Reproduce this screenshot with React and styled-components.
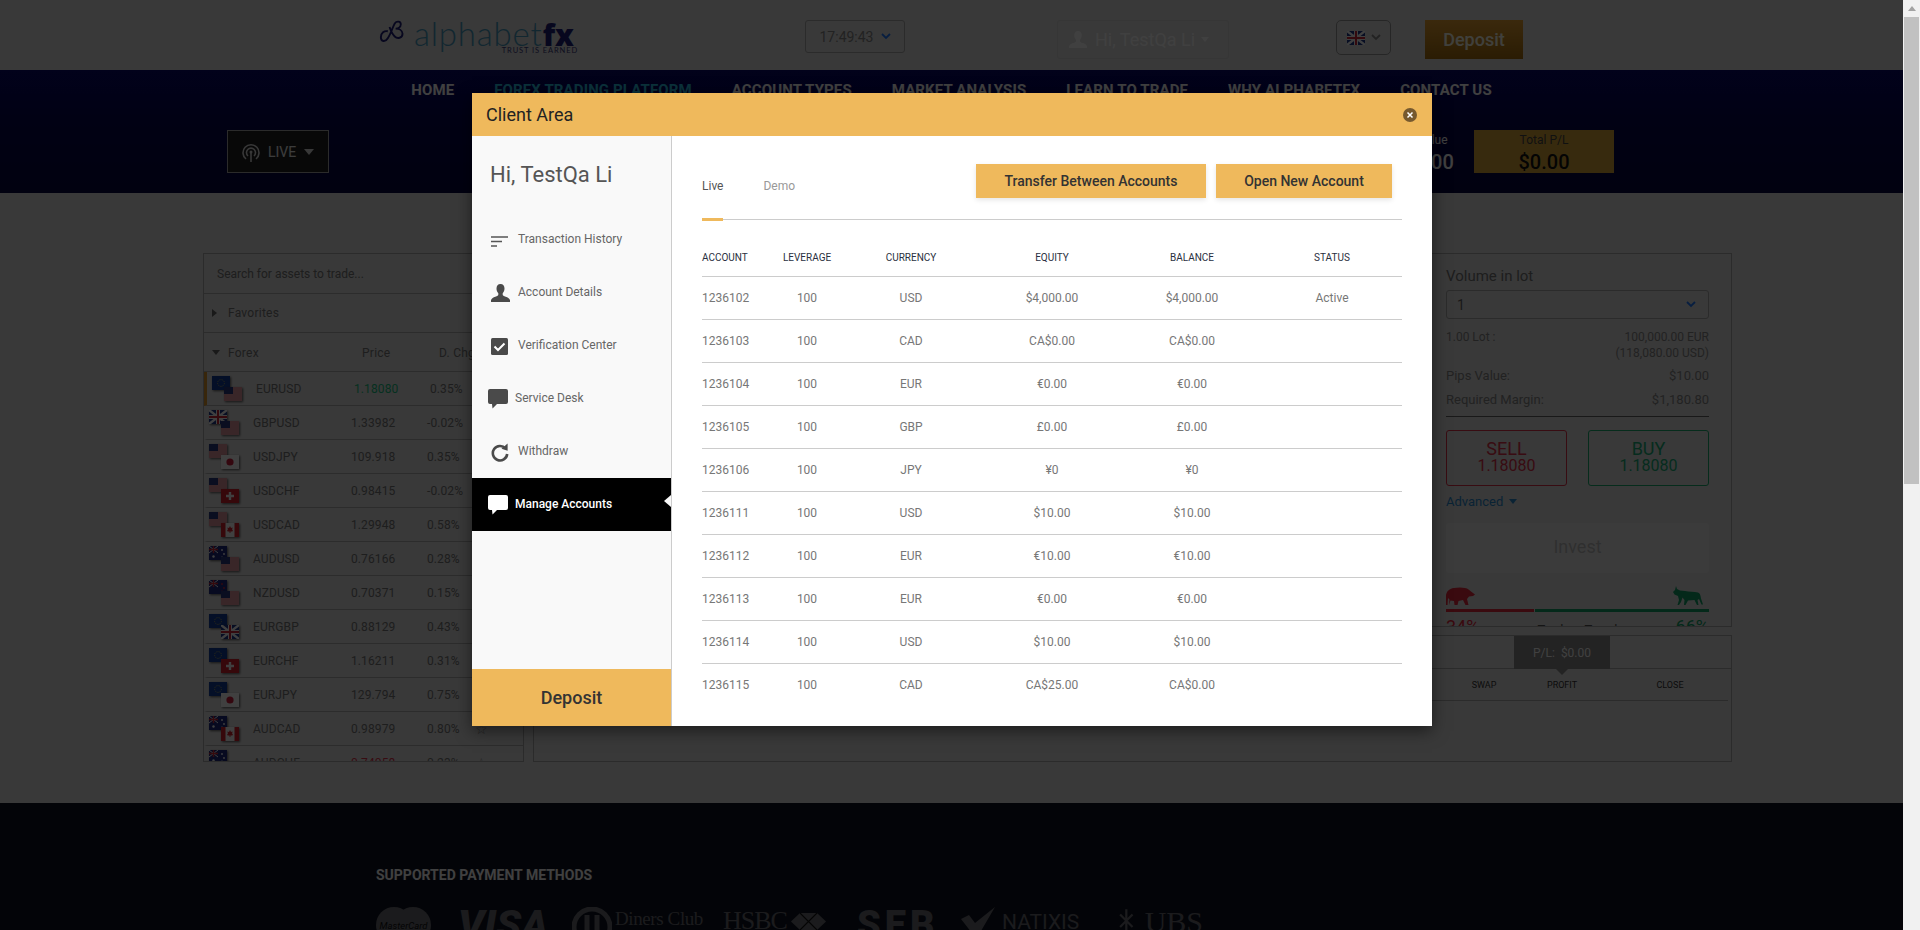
import styled, {createGlobalStyle} from "styled-components";

const GlobalStyle = createGlobalStyle`
  html, body {
    margin: 0;
    height: 930px;
    overflow: hidden;
    font-family: Roboto, "Liberation Sans", sans-serif;
  }
  * { box-sizing: border-box; }
`;

const Screen = styled.div`
  display: flex;
  width: 1920px;
  height: 930px;
`;

const Page = styled.div`
  position: relative;
  width: 1903px;
  height: 930px;
  overflow: hidden;
  background: #e2e2e2;
  display: flex;
  flex-direction: column;
`;

const Scrollbar = styled.div`
  width: 17px;
  background: #f1f1f1;
  display: flex;
  flex-direction: column;
  align-items: center;
`;

const ScrollArrow = styled.div`
  height: 17px;
  width: 17px;
  display: flex;
  align-items: center;
  justify-content: center;
  &::before {
    content: "";
    border-left: 4px solid transparent;
    border-right: 4px solid transparent;
    border-bottom: 5px solid #a3a3a3;
  }
`;

const ScrollThumb = styled.div`
  width: 15px;
  height: 467px;
  background: #c1c1c1;
`;

/* top bar */
const TopBar = styled.header`
  height: 70px;
  flex: none;
  display: flex;
  align-items: flex-start;
  padding: 20px 0 0 377px;
`;

const Logo = styled.div`
  width: 201px;
  height: 36px;
  display: flex;
  position: relative;
  align-items: flex-start;
`;

const LogoWord = styled.div`
  font-family: Lato, sans-serif;
  font-size: 33px;
  line-height: 32px;
  font-weight: 300;
  color: #4a9cc0;
  margin: -3px 0 0 5px;
  letter-spacing: 0.8px;
  white-space: nowrap;
  b {
    font-family: "Open Sans", sans-serif;
    font-size: 30px;
    font-weight: 800;
    color: #1c1c78;
    letter-spacing: 0;
  }
`;

const LogoTag = styled.div`
  position: absolute;
  right: 0;
  top: 26px;
  font-family: Lato, sans-serif;
  font-size: 7.5px;
  line-height: 9px;
  letter-spacing: 0.9px;
  color: #3a3a7a;
`;

const TimeBox = styled.div`
  width: 100px;
  height: 33px;
  margin-left: 227px;
  border: 1px solid #aaa;
  border-radius: 3px;
  display: flex;
  align-items: center;
  justify-content: center;
  gap: 7px;
  font-size: 14px;
  color: #888;
`;

const UserBox = styled.div`
  width: 172px;
  height: 39px;
  margin-left: 152px;
  border: 1px solid #d6d6d6;
  border-radius: 3px;
  display: flex;
  align-items: center;
  padding-left: 11px;
  gap: 8px;
  font-size: 18px;
  color: #fff;
  &::after {
    content: "";
    margin-left: -2px;
    border-left: 4px solid transparent;
    border-right: 4px solid transparent;
    border-top: 5px solid #fff;
  }
`;

const FlagBox = styled.div`
  width: 55px;
  height: 35px;
  margin-left: 107px;
  border: 1px solid #999;
  border-radius: 5px;
  display: flex;
  align-items: center;
  padding-left: 10px;
  gap: 6px;
`;

const HeaderDeposit = styled.div`
  width: 98px;
  height: 39px;
  margin-left: 34px;
  background: linear-gradient(#e9a233, #a8700f);
  display: flex;
  align-items: center;
  justify-content: center;
  font-size: 18px;
  font-weight: 500;
  color: #ffe;
`;

/* navigation band */
const NavBand = styled.div`
  height: 123px;
  flex: none;
  background: linear-gradient(#08086c, #060650 40%, #050540);
  position: relative;
`;

const Nav = styled.nav`
  display: flex;
  justify-content: center;
  gap: 40px;
  padding-top: 11px;
`;

const NavLink = styled.a`
  font-size: 15px;
  line-height: 18px;
  font-weight: 700;
  letter-spacing: 0.12px;
  color: ${(p) => (p.$active ? "#2fc4e8" : "#ffffff")};
`;

const AccountRow = styled.div`
  display: flex;
  align-items: stretch;
  height: 43px;
  margin-top: 31px;
  padding: 0 289px 0 227px;
`;

const LiveBox = styled.div`
  width: 102px;
  background: #222;
  border: 1px solid #aaa;
  display: flex;
  align-items: center;
  padding-left: 14px;
  gap: 8px;
  font-size: 14px;
  color: #eee;
  &::after {
    content: "";
    border-left: 5px solid transparent;
    border-right: 5px solid transparent;
    border-top: 6px solid #ddd;
  }
`;

const Stat = styled.div`
  margin-left: auto;
  width: 90px;
  margin-right: 20px;
  text-align: center;
  color: #fff;
  font-size: 12px;
  padding-top: 3px;
  div {
    font-size: 20px;
    font-weight: 500;
    margin-top: 3px;
  }
`;

const TotalBox = styled.div`
  width: 140px;
  background: #dca838;
  color: #444;
  text-align: center;
  font-size: 12px;
  padding-top: 3px;
  div {
    font-size: 20px;
    font-weight: 500;
    margin-top: 3px;
    color: #111;
  }
`;

/* platform panels */
const Main = styled.main`
  height: 610px;
  flex: none;
  padding: 60px 171px 0 203px;
  display: flex;
  gap: 9px;
  align-items: flex-start;
`;

const AssetPanel = styled.section`
  width: 321px;
  height: 509px;
  flex: none;
  border: 1px solid #aaa;
  overflow: hidden;
`;

const SearchRow = styled.div`
  height: 40px;
  border-bottom: 1px solid #b0b0b0;
  padding: 0 13px;
  display: flex;
  align-items: center;
  font-size: 12px;
  color: #777;
`;

const GroupRow = styled.div`
  height: ${(p) => p.$height}px;
  padding-top: ${(p) => p.$top || 0}px;
  border-bottom: 1px solid #b0b0b0;
  display: grid;
  grid-template-columns: 18px 134px 77px 1fr;
  align-items: center;
  padding-left: 6px;
  font-size: 12px;
  letter-spacing: 0.25px;
  color: #777;
`;

const Caret = styled.i`
  width: 0;
  height: 0;
  margin-left: 2px;
  ${(p) =>
    p.$open
      ? "border-left: 4px solid transparent; border-right: 4px solid transparent; border-top: 5px solid #666;"
      : "border-top: 4px solid transparent; border-bottom: 4px solid transparent; border-left: 5px solid #666;"}
`;

const AssetRow = styled.div`
  height: 34px;
  flex: none;
  border-bottom: 1px solid #b0b0b0;
  border-left: 3px solid ${(p) => (p.$active ? "#e0992c" : "transparent")};
  display: grid;
  grid-template-columns: ${(p) => (p.$active ? "49px" : "46px")} 98px 76px 48px 1fr;
  align-items: center;
  font-size: 12px;
  letter-spacing: 0.1px;
  color: #777;
`;

const FlagPair = styled.div`
  position: relative;
  height: 33px;
  margin-left: ${(p) => (p.$active ? "5px" : "2px")};
  svg {
    position: absolute;
    filter: drop-shadow(1px 1px 1px rgba(0, 0, 0, 0.6));
  }
  svg:first-child {
    left: 0;
    top: 4px;
  }
  svg:last-child {
    left: 12px;
    top: 15px;
  }
`;

const Price = styled.span`
  color: ${(p) => (p.$tone === "up" ? "#18c080" : p.$tone === "down" ? "#e0304a" : "#777")};
`;

const Star = styled.span`
  font-size: 14px;
  color: #888;
`;

const Workspace = styled.div`
  flex: 1;
  min-width: 0;
  height: 509px;
  display: flex;
  flex-direction: column;
  gap: 8px;
`;

const UpperRow = styled.div`
  height: 374px;
  flex: none;
  display: flex;
  border: 1px solid #aaa;
  overflow: hidden;
`;

const ChartArea = styled.div`
  flex: 1;
`;

const TradePanel = styled.aside`
  width: 297px;
  flex: none;
  padding: 11px 22px 0 12px;
  font-size: 12px;
  color: #888;
`;

const TradeTitle = styled.div`
  font-size: 15px;
  line-height: 22px;
  color: #777;
`;

const VolumeSelect = styled.div`
  height: 29px;
  margin-top: 3px;
  border: 1px solid #aaa;
  border-radius: 3px;
  display: flex;
  align-items: center;
  justify-content: space-between;
  padding: 0 12px 0 10px;
  font-size: 14px;
  color: #666;
`;

const InfoRow = styled.div`
  display: flex;
  justify-content: space-between;
  margin-top: ${(p) => p.$top || 0}px;
  line-height: 16px;
  font-size: ${(p) => p.$size || 12}px;
  text-align: right;
`;

const InfoRule = styled.div`
  height: 1px;
  background: #666;
  margin-top: 8px;
`;

const Sides = styled.div`
  display: flex;
  justify-content: space-between;
  margin-top: 13px;
`;

const SideButton = styled.div`
  width: 121px;
  height: 56px;
  border: 1px solid ${(p) => (p.$buy ? "#18b070" : "#e03048")};
  border-radius: 3px;
  text-align: center;
  color: ${(p) => (p.$buy ? "#18b078" : "#e03048")};
  font-size: 18px;
  line-height: 17px;
  padding-top: 9px;
  span {
    display: block;
    font-size: 16px;
  }
`;

const Advanced = styled.div`
  margin-top: 8px;
  margin-bottom: 14px;
  font-size: 13px;
  line-height: 15px;
  color: #2a8ad0;
  display: flex;
  align-items: center;
  gap: 6px;
  &::after {
    content: "";
    border-left: 4px solid transparent;
    border-right: 4px solid transparent;
    border-top: 5px solid #2a8ad0;
  }
`;

const InvestBox = styled.div`
  height: 50px;
  border-radius: 3px;
  background: #ececec;
  display: flex;
  align-items: flex-start;
  justify-content: center;
  padding-top: 13px;
  font-size: 18px;
  color: #bcbcbc;
`;

const TrendIcons = styled.div`
  display: flex;
  justify-content: space-between;
  align-items: flex-end;
  margin-top: 13px;
  padding-right: 6px;
`;

const TrendBar = styled.div`
  display: flex;
  gap: 1px;
  height: 3px;
  margin-top: 4px;
`;

const TrendPart = styled.div`
  width: ${(p) => p.$width}px;
  background: ${(p) => p.$color};
`;

const TrendText = styled.div`
  display: flex;
  justify-content: space-between;
  align-items: flex-end;
  margin-top: 4px;
  font-size: 13px;
  color: #555;
`;

const TrendValue = styled.span`
  font-size: 18px;
  color: ${(p) => p.$color};
`;

const PositionsPanel = styled.div`
  height: 127px;
  flex: none;
  border: 1px solid #aaa;
  position: relative;
`;

const TopStrip = styled.div`
  height: 33px;
  border-bottom: 1px solid #aaa;
`;

const ColumnStrip = styled.div`
  height: 32px;
  margin-right: 3px;
  border-bottom: 1px solid #aaa;
  display: flex;
  align-items: center;
  padding-left: 911px;
  font-size: 9px;
  color: #333;
`;

const ColumnCell = styled.span`
  width: ${(p) => p.$width}px;
  text-align: center;
  flex: none;
`;

const PnlTip = styled.div`
  position: absolute;
  top: 0;
  left: 980px;
  width: 96px;
  height: 33px;
  background: #8a8a8a;
  color: #fff;
  font-size: 12px;
  display: flex;
  align-items: center;
  justify-content: center;
  gap: 6px;
  &::after {
    content: "";
    position: absolute;
    top: 33px;
    left: 42px;
    border-left: 6px solid transparent;
    border-right: 6px solid transparent;
    border-top: 6px solid #8a8a8a;
  }
`;

/* footer */
const Footer = styled.footer`
  flex: 1;
  overflow: hidden;
  background: #0e1320;
  padding: 62px 0 0 376px;
`;

const FooterTitle = styled.div`
  font-size: 14px;
  line-height: 20px;
  font-weight: 700;
  color: #ffffff;
`;

const Brands = styled.div`
  display: flex;
  align-items: flex-start;
  margin-top: 22px;
  color: #6c6c74;
`;

const Brand = styled.span`
  width: ${(p) => p.$width}px;
  flex: none;
  display: flex;
  gap: ${(p) => p.$gap || 0}px;
  font-family: ${(p) => p.$font || "Roboto, sans-serif"};
  font-size: ${(p) => p.$size}px;
  font-weight: ${(p) => p.$weight || 400};
  font-style: ${(p) => (p.$italic ? "italic" : "normal")};
  letter-spacing: ${(p) => p.$spacing || 0}px;
  line-height: ${(p) => p.$line || 40}px;
  white-space: nowrap;
`;

const DinersText = styled.span`
  display: flex;
  flex-direction: column;
  padding-top: 2px;
  small {
    font-size: 8px;
    line-height: 9px;
    letter-spacing: 0.3px;
  }
`;

const HexWrap = styled.span`
  display: flex;
  margin: 6px 0 0 4px;
`;

const MasterBadge = styled.span`
  position: relative;
  width: 55px;
  height: 36px;
  margin-right: 27px;
  flex: none;
  color: #111;
  font-size: 9.5px;
  font-style: italic;
  display: flex;
  align-items: center;
  justify-content: center;
  z-index: 0;
  &::before,
  &::after {
    content: "";
    position: absolute;
    top: 0;
    width: 36px;
    height: 36px;
    border-radius: 50%;
    background: #6c6c74;
    z-index: -1;
  }
  &::before {
    left: 0;
  }
  &::after {
    right: 0;
  }
`;

/* modal */
const Backdrop = styled.div`
  position: absolute;
  inset: 0;
  background: rgba(0, 0, 0, 0.75);
  padding: 93px 0 0 472px;
`;

const Modal = styled.div`
  width: 960px;
  height: 633px;
  background: #fff;
  box-shadow: 0 5px 15px rgba(0, 0, 0, 0.5);
  display: flex;
  flex-direction: column;
`;

const ModalHead = styled.div`
  height: 43px;
  flex: none;
  background: #efb95c;
  display: flex;
  align-items: center;
  justify-content: space-between;
  padding: 0 15px 0 14px;
  font-size: 18px;
  color: #222;
`;

const CloseButton = styled.button`
  width: 14px;
  height: 14px;
  padding: 0;
  border: none;
  border-radius: 50%;
  background: #76592e;
  display: flex;
  align-items: center;
  justify-content: center;
`;

const ModalBody = styled.div`
  flex: 1;
  display: flex;
  min-height: 0;
`;

const Sidebar = styled.div`
  width: 200px;
  flex: none;
  background: #f9f9f9;
  border-right: 1px solid #ccc;
  display: flex;
  flex-direction: column;
`;

const Greeting = styled.div`
  height: 77px;
  flex: none;
  padding: 25px 0 0 18px;
  font-size: 22px;
  line-height: 28px;
  color: #555;
`;

const MenuItem = styled.a`
  position: relative;
  height: 53px;
  flex: none;
  display: flex;
  align-items: center;
  padding-left: 16px;
  font-size: 12px;
  font-weight: ${(p) => (p.$active ? 500 : 400)};
  color: ${(p) => (p.$active ? "#fff" : "#666")};
  background: ${(p) => (p.$active ? "#000" : "transparent")};
  ${(p) =>
    p.$active &&
    `&::after {
      content: "";
      position: absolute;
      right: 0;
      top: 17px;
      border-top: 6px solid transparent;
      border-bottom: 6px solid transparent;
      border-right: 7px solid #f9f9f9;
    }`}
`;

const MenuIcon = styled.span`
  width: ${(p) => (p.$wide ? 27 : 30)}px;
  flex: none;
  display: flex;
  padding-left: ${(p) => (p.$wide ? 0 : 3)}px;
`;

const MenuLabel = styled.span`
  margin-bottom: 2px;
`;

const SideDeposit = styled.button`
  margin-top: auto;
  height: 57px;
  flex: none;
  border: none;
  background: #efb95c;
  font-family: inherit;
  font-size: 18px;
  font-weight: 500;
  color: #333;
`;

const Content = styled.div`
  flex: 1;
  min-width: 0;
  padding: 0 30px;
`;

const ContentBar = styled.div`
  position: relative;
  height: 84px;
  padding: 28px 10px 0 0;
  border-bottom: 1px solid #ccc;
  display: flex;
  align-items: flex-start;
  &::after {
    content: "";
    position: absolute;
    left: 0;
    bottom: -2px;
    width: 21px;
    height: 3px;
    background: #efb95c;
  }
`;

const Tabs = styled.div`
  display: flex;
  gap: 40px;
  margin-top: 14px;
  margin-right: auto;
`;

const Tab = styled.a`
  font-size: 12px;
  line-height: 16px;
  color: ${(p) => (p.$active ? "#555" : "#999")};
`;

const ActionButton = styled.button`
  width: ${(p) => p.$width}px;
  height: 34px;
  margin-left: ${(p) => p.$left || 0}px;
  border: none;
  background: #efb95c;
  box-shadow: 0 2px 5px rgba(0, 0, 0, 0.1);
  font-family: inherit;
  font-size: 14px;
  font-weight: 500;
  color: #333;
`;

const TableGrid = `
  display: grid;
  grid-template-columns: 72px 66px 142px 140px 140px 140px;
  align-items: center;
`;

const HeadRow = styled.div`
  ${TableGrid}
  height: 57px;
  padding-top: 18px;
  border-bottom: 1px solid #ccc;
  font-size: 10px;
  color: #2a3040;
`;

const BodyRow = styled.div`
  ${TableGrid}
  height: 43px;
  padding-bottom: 1px;
  border-bottom: ${(p) => (p.$last ? "none" : "1px solid #ccc")};
  font-size: 12px;
  color: #777;
`;

const Cell = styled.span`
  text-align: ${(p) => (p.$left ? "left" : "center")};
`;

const Flag = ({code}) => {
  const art = {
    eu: (
      <>
        <rect width="18" height="14" fill="#123f9c" />
        <circle cx="9" cy="7" r="3.4" fill="none" stroke="#e8c840" strokeWidth="0.8" strokeDasharray="0.8 1.1" />
      </>
    ),
    us: (
      <>
        <rect width="18" height="14" fill="#fff" />
        <path d="M0 1h18M0 3h18M0 5h18M0 7h18M0 9h18M0 11h18M0 13h18" stroke="#c8313e" strokeWidth="1" />
        <rect width="9" height="7" fill="#2a3a80" />
      </>
    ),
    gb: (
      <>
        <rect width="18" height="14" fill="#1f3a8c" />
        <path d="M0 0l18 14M18 0L0 14" stroke="#fff" strokeWidth="2.4" />
        <path d="M9 0v14M0 7h18" stroke="#fff" strokeWidth="4" />
        <path d="M9 0v14M0 7h18" stroke="#d02838" strokeWidth="2" />
      </>
    ),
    jp: (
      <>
        <rect width="18" height="14" fill="#fff" />
        <circle cx="9" cy="7" r="3.6" fill="#d01c3c" />
      </>
    ),
    ch: (
      <>
        <rect width="18" height="14" fill="#d8202c" />
        <path d="M9 3v8M5 7h8" stroke="#fff" strokeWidth="2.4" />
      </>
    ),
    ca: (
      <>
        <rect width="18" height="14" fill="#fff" />
        <rect width="4.5" height="14" fill="#d8202c" />
        <rect x="13.5" width="4.5" height="14" fill="#d8202c" />
        <path d="M9 3l1 2 1.6-.6-.6 2.6 1-.2-.6 1.6H9.4V10h-.8V8.4H6.6L6 6.8l1 .2-.6-2.6L8 5z" fill="#d8202c" />
      </>
    ),
    au: (
      <>
        <rect width="18" height="14" fill="#1c2a80" />
        <path d="M0 0l9 7M9 0L0 7" stroke="#fff" strokeWidth="1" />
        <path d="M4.5 0v7M0 3.5h9" stroke="#d02838" strokeWidth="1.4" />
        <circle cx="4.5" cy="10.5" r="1.2" fill="#fff" />
        <circle cx="13" cy="4" r="0.9" fill="#fff" />
        <circle cx="15" cy="8" r="0.9" fill="#fff" />
        <circle cx="13" cy="11.5" r="0.9" fill="#fff" />
      </>
    ),
    nz: (
      <>
        <rect width="18" height="14" fill="#1c2a80" />
        <path d="M0 0l9 7M9 0L0 7" stroke="#fff" strokeWidth="1" />
        <path d="M4.5 0v7M0 3.5h9" stroke="#d02838" strokeWidth="1.4" />
        <circle cx="13" cy="4" r="0.9" fill="#d02838" />
        <circle cx="15" cy="8" r="0.9" fill="#d02838" />
        <circle cx="13" cy="11.5" r="0.9" fill="#d02838" />
      </>
    ),
  };
  return (
    <svg width="18" height="14" viewBox="0 0 18 14">
      {art[code]}
    </svg>
  );
};

const Chevron = ({color}) => (
  <svg width="10" height="7" viewBox="0 0 10 7">
    <path d="M1 1l4 4 4-4" fill="none" stroke={color} strokeWidth="1.8" />
  </svg>
);

const PersonIcon = ({fill, size = 19}) => (
  <svg width={size} height={(size * 18) / 19} viewBox="0 0 19 18">
    <path
      d="M9.5 0c2.6 0 4 2 4 4.6 0 2-.8 3.6-1.8 4.6v1.6c0 .8 1 1.2 3 2 2 .7 3.6 1.6 4.3 3.2V18H0v-2c.7-1.6 2.3-2.5 4.3-3.2 2-.8 3-1.2 3-2V9.2c-1-1-1.8-2.6-1.8-4.6C5.5 2 6.9 0 9.5 0z"
      fill={fill}
    />
  </svg>
);

const LinesIcon = () => (
  <svg width="18" height="20" viewBox="0 0 18 20">
    <path d="M0 7h17M0 11.5h11M0 16h6" fill="none" stroke="#555" strokeWidth="1.7" />
  </svg>
);

const CheckIcon = () => (
  <svg width="17" height="20" viewBox="0 0 17 20">
    <rect y="2" width="17" height="17" rx="1.5" fill="#4a4a4a" />
    <path d="M3.5 10.5l3.5 3.5 6.5-6.5" fill="none" stroke="#fff" strokeWidth="2" />
  </svg>
);

const ChatIcon = ({fill}) => (
  <svg width="20" height="20" viewBox="0 0 20 20">
    <path d="M2 0h16a2 2 0 0 1 2 2v11a2 2 0 0 1-2 2H9l-4.5 4.5L4 15H2a2 2 0 0 1-2-2V2a2 2 0 0 1 2-2z" fill={fill} />
  </svg>
);

const RefreshIcon = () => (
  <svg width="18" height="20" viewBox="0 0 18 20">
    <path d="M14.5 6.5A7.2 7.2 0 1 0 16.2 12" fill="none" stroke="#4a4a4a" strokeWidth="2.6" />
    <path d="M10.5 6.8L16.6 8.8 16.6 1.4z" fill="#4a4a4a" />
  </svg>
);

const CloseIcon = () => (
  <svg width="8" height="8" viewBox="0 0 8 8">
    <path d="M1.5 1.5l5 5M6.5 1.5l-5 5" stroke="#fff" strokeWidth="1.5" />
  </svg>
);

const SignalIcon = () => (
  <svg width="18" height="22" viewBox="0 0 18 22">
    <g fill="none" stroke="#ddd" strokeWidth="1.6">
      <path d="M4 18a8 8 0 1 1 10 0" />
      <path d="M6 15a4.5 4.5 0 1 1 6 0" />
    </g>
    <circle cx="9" cy="11" r="1.5" fill="#ddd" />
    <path d="M9 12v9" stroke="#ddd" strokeWidth="1.6" />
  </svg>
);

const BearIcon = () => (
  <svg width="29" height="18" viewBox="0 0 29 18">
    <path
      d="M0 18V9C0 5 3 1.5 8 1c3-.5 7-1 11 0 3 .5 4.5 2 6 3.5L29 7.5l-2 1.5-4 .5-2 2.5 1.5 6h-3l-2.5-5-4.5 1-1 4h-3l-.5-4-3.5-.5-1.5 4.5H3l.5-5.5L2 11l-.5 7z"
      fill="#e8283c"
    />
  </svg>
);

const BullIcon = () => (
  <svg width="30" height="19" viewBox="0 0 30 19">
    <path
      d="M3 0l1 3 3 1.5L12 5c4 1 9 .5 13 1.5 2 .5 2.5 3 3 6l2 6h-1.5L26 13l-1.5 1 1 5H24l-2.500-5-6.500.5L12.500 19H11l.5-5-2-2.500L8 16l-2 3H4.500L6 14 5 10 1.500 8.500 0 6l2-2z"
      fill="#10a468"
    />
  </svg>
);

const DinersMark = () => (
  <svg width="40" height="40" viewBox="0 0 40 40">
    <circle cx="20" cy="20" r="18" fill="none" stroke="#6c6c74" strokeWidth="5" />
    <path d="M15 8v24M25 8v24" stroke="#6c6c74" strokeWidth="5" />
  </svg>
);

const HexMark = () => (
  <svg width="35" height="17" viewBox="0 0 35 17">
    <path d="M9 0h17l9 8.5L26 17H9L0 8.500z" fill="#6c6c74" />
    <path d="M9 0l8.500 8.500L9 17M26 0l-8.500 8.500L26 17" fill="none" stroke="#111" strokeWidth="1.2" />
  </svg>
);

const NatixisMark = () => (
  <svg width="36" height="30" viewBox="0 0 36 30">
    <path d="M0 12l8-4 6 8L34 0 20 24l-6 6z" fill="#6c6c74" />
  </svg>
);

const KeysMark = () => (
  <svg width="30" height="40" viewBox="0 0 30 40">
    <g fill="none" stroke="#6c6c74" strokeWidth="2.5">
      <path d="M15 0v26M8 6l14 14M22 6L8 20" />
      <circle cx="7" cy="30" r="4" />
      <circle cx="15" cy="30" r="4" />
      <circle cx="23" cy="30" r="4" />
    </g>
  </svg>
);

const ACCOUNTS = [
  ["1236102", "USD", "$4,000.00", "$4,000.00", "Active"],
  ["1236103", "CAD", "CA$0.00", "CA$0.00", ""],
  ["1236104", "EUR", "€0.00", "€0.00", ""],
  ["1236105", "GBP", "£0.00", "£0.00", ""],
  ["1236106", "JPY", "¥0", "¥0", ""],
  ["1236111", "USD", "$10.00", "$10.00", ""],
  ["1236112", "EUR", "€10.00", "€10.00", ""],
  ["1236113", "EUR", "€0.00", "€0.00", ""],
  ["1236114", "USD", "$10.00", "$10.00", ""],
  ["1236115", "CAD", "CA$25.00", "CA$0.00", ""],
];

const ASSETS = [
  ["EURUSD", "1.18080", "0.35%", "eu", "us", "up"],
  ["GBPUSD", "1.33982", "-0.02%", "gb", "us"],
  ["USDJPY", "109.918", "0.35%", "us", "jp"],
  ["USDCHF", "0.98415", "-0.02%", "us", "ch"],
  ["USDCAD", "1.29948", "0.58%", "us", "ca"],
  ["AUDUSD", "0.76166", "0.28%", "au", "us"],
  ["NZDUSD", "0.70371", "0.15%", "nz", "us"],
  ["EURGBP", "0.88129", "0.43%", "eu", "gb"],
  ["EURCHF", "1.16211", "0.31%", "eu", "ch"],
  ["EURJPY", "129.794", "0.75%", "eu", "jp"],
  ["AUDCAD", "0.98979", "0.80%", "au", "ca"],
  ["AUDCHF", "0.74058", "0.23%", "au", "ch", "down"],
];

const NAV = ["HOME", "FOREX TRADING PLATFORM", "ACCOUNT TYPES", "MARKET ANALYSIS", "LEARN TO TRADE", "WHY ALPHABETFX", "CONTACT US"];

const MENU = [
  ["Transaction History", <LinesIcon key="l" />],
  ["Account Details", <PersonIcon key="p" fill="#4a4a4a" />],
  ["Verification Center", <CheckIcon key="c" />],
  ["Service Desk", <ChatIcon key="s" fill="#4a4a4a" />, true],
  ["Withdraw", <RefreshIcon key="r" />],
  ["Manage Accounts", <ChatIcon key="m" fill="#fff" />, true, true],
];

const App = () => {
  return (
    <Screen>
      <GlobalStyle />
      <Page>
        <TopBar>
          <Logo>
            <svg width="32" height="26" viewBox="0 0 32 30">
              <g fill="none" stroke="#1c1c78" strokeWidth="2.2">
                <path d="M10 13c-4-1-8 2-8 7s5 6 8 1c4-6 6-14 8-17 2-3 7-3 7 1s-4 5-6 5c4 0 8 2 8 6 0 5-6 6-9 3-2-2-5-8-6-11" />
              </g>
            </svg>
            <LogoWord>
              alphabet<b>fx</b>
            </LogoWord>
            <LogoTag>TRUST IS EARNED</LogoTag>
          </Logo>
          <TimeBox>
            17:49:43
            <Chevron color="#1f78ff" />
          </TimeBox>
          <UserBox>
            <PersonIcon fill="#fff" size={18} />
            Hi, TestQa Li
          </UserBox>
          <FlagBox>
            <Flag code="gb" />
            <Chevron color="#888" />
          </FlagBox>
          <HeaderDeposit>Deposit</HeaderDeposit>
        </TopBar>

        <NavBand>
          <Nav>
            {NAV.map((item, i) => (
              <NavLink key={item} $active={i === 1}>
                {item}
              </NavLink>
            ))}
          </Nav>
          <AccountRow>
            <LiveBox>
              <SignalIcon />
              LIVE
            </LiveBox>
            <Stat>
              Account Value
              <div>$4,000.00</div>
            </Stat>
            <TotalBox>
              Total P/L
              <div>$0.00</div>
            </TotalBox>
          </AccountRow>
        </NavBand>

        <Main>
          <AssetPanel>
            <SearchRow>Search for assets to trade...</SearchRow>
            <GroupRow $height={39}>
              <Caret />
              <span>Favorites</span>
            </GroupRow>
            <GroupRow $height={39} $top={1}>
              <Caret $open />
              <span>Forex</span>
              <span>Price</span>
              <span>D. Chg</span>
            </GroupRow>
            {ASSETS.map(([name, price, change, a, b, tone], i) => (
              <AssetRow key={name} $active={i === 0}>
                <FlagPair $active={i === 0}>
                  <Flag code={a} />
                  <Flag code={b} />
                </FlagPair>
                <span>{name}</span>
                <Price $tone={tone}>{price}</Price>
                <span>{change}</span>
                <Star>☆</Star>
              </AssetRow>
            ))}
          </AssetPanel>

          <Workspace>
            <UpperRow>
              <ChartArea />
              <TradePanel>
                <TradeTitle>Volume in lot</TradeTitle>
                <VolumeSelect>
                  1
                  <Chevron color="#1f78ff" />
                </VolumeSelect>
                <InfoRow $top={10}>
                  <span>1.00 Lot :</span>
                  <span>
                    100,000.00 EUR
                    <br />
                    (118,080.00 USD)
                  </span>
                </InfoRow>
                <InfoRow $top={7} $size={13}>
                  <span>Pips Value:</span>
                  <span>$10.00</span>
                </InfoRow>
                <InfoRow $top={8} $size={13}>
                  <span>Required Margin:</span>
                  <span>$1,180.80</span>
                </InfoRow>
                <InfoRule />
                <Sides>
                  <SideButton>
                    SELL
                    <span>1.18080</span>
                  </SideButton>
                  <SideButton $buy>
                    BUY
                    <span>1.18080</span>
                  </SideButton>
                </Sides>
                <Advanced>Advanced</Advanced>
                <InvestBox>Invest</InvestBox>
                <TrendIcons>
                  <BearIcon />
                  <BullIcon />
                </TrendIcons>
                <TrendBar>
                  <TrendPart $width={88} $color="#e8283c" />
                  <TrendPart $width={174} $color="#10a468" />
                </TrendBar>
                <TrendText>
                  <TrendValue $color="#e8283c">34%</TrendValue>
                  Traders Trend
                  <TrendValue $color="#10a468">66%</TrendValue>
                </TrendText>
              </TradePanel>
            </UpperRow>
            <PositionsPanel>
              <TopStrip />
              <PnlTip>
                <span>P/L:</span>
                <span>$0.00</span>
              </PnlTip>
              <ColumnStrip>
                <ColumnCell $width={78}>SWAP</ColumnCell>
                <ColumnCell $width={78}>PROFIT</ColumnCell>
                <ColumnCell $width={138}>CLOSE</ColumnCell>
              </ColumnStrip>
            </PositionsPanel>
          </Workspace>
        </Main>

        <Footer>
          <FooterTitle>SUPPORTED PAYMENT METHODS</FooterTitle>
          <Brands>
            <MasterBadge>MasterCard</MasterBadge>
            <Brand $width={114} $size={41} $weight={900} $line={36} $italic>
              VISA
            </Brand>
            <Brand $width={151} $size={19} $spacing={-0.4} $line={20} $gap={3} $font='"Liberation Serif", serif'>
              <DinersMark />
              <DinersText>
                Diners Club
                <small>INTERNATIONAL</small>
              </DinersText>
            </Brand>
            <Brand $width={134} $size={26} $spacing={-1} $line={28} $font='"Liberation Serif", serif'>
              HSBC
              <HexWrap>
                <HexMark />
              </HexWrap>
            </Brand>
            <Brand $width={104} $size={38} $weight={900} $spacing={4} $line={36}>
              SEB
            </Brand>
            <Brand $width={152} $size={21} $line={30} $gap={5}>
              <NatixisMark />
              NATIXIS
            </Brand>
            <Brand $width={90} $size={30} $line={30} $gap={5} $font='"Liberation Serif", serif'>
              <KeysMark />
              UBS
            </Brand>
          </Brands>
        </Footer>

        <Backdrop>
          <Modal>
            <ModalHead>
              Client Area
              <CloseButton>
                <CloseIcon />
              </CloseButton>
            </ModalHead>
            <ModalBody>
              <Sidebar>
                <Greeting>Hi, TestQa Li</Greeting>
                {MENU.map(([label, icon, wide, active]) => (
                  <MenuItem key={label} $active={active}>
                    <MenuIcon $wide={wide}>{icon}</MenuIcon>
                    <MenuLabel>{label}</MenuLabel>
                  </MenuItem>
                ))}
                <SideDeposit>Deposit</SideDeposit>
              </Sidebar>
              <Content>
                <ContentBar>
                  <Tabs>
                    <Tab $active>Live</Tab>
                    <Tab>Demo</Tab>
                  </Tabs>
                  <ActionButton $width={230}>Transfer Between Accounts</ActionButton>
                  <ActionButton $width={176} $left={10}>
                    Open New Account
                  </ActionButton>
                </ContentBar>
                <HeadRow>
                  <Cell $left>ACCOUNT</Cell>
                  <Cell>LEVERAGE</Cell>
                  <Cell>CURRENCY</Cell>
                  <Cell>EQUITY</Cell>
                  <Cell>BALANCE</Cell>
                  <Cell>STATUS</Cell>
                </HeadRow>
                {ACCOUNTS.map(([id, currency, equity, balance, status], i) => (
                  <BodyRow key={id} $last={i === ACCOUNTS.length - 1}>
                    <Cell $left>{id}</Cell>
                    <Cell>100</Cell>
                    <Cell>{currency}</Cell>
                    <Cell>{equity}</Cell>
                    <Cell>{balance}</Cell>
                    <Cell>{status}</Cell>
                  </BodyRow>
                ))}
              </Content>
            </ModalBody>
          </Modal>
        </Backdrop>
      </Page>
      <Scrollbar>
        <ScrollArrow />
        <ScrollThumb />
      </Scrollbar>
    </Screen>
  );
};

export default App;
